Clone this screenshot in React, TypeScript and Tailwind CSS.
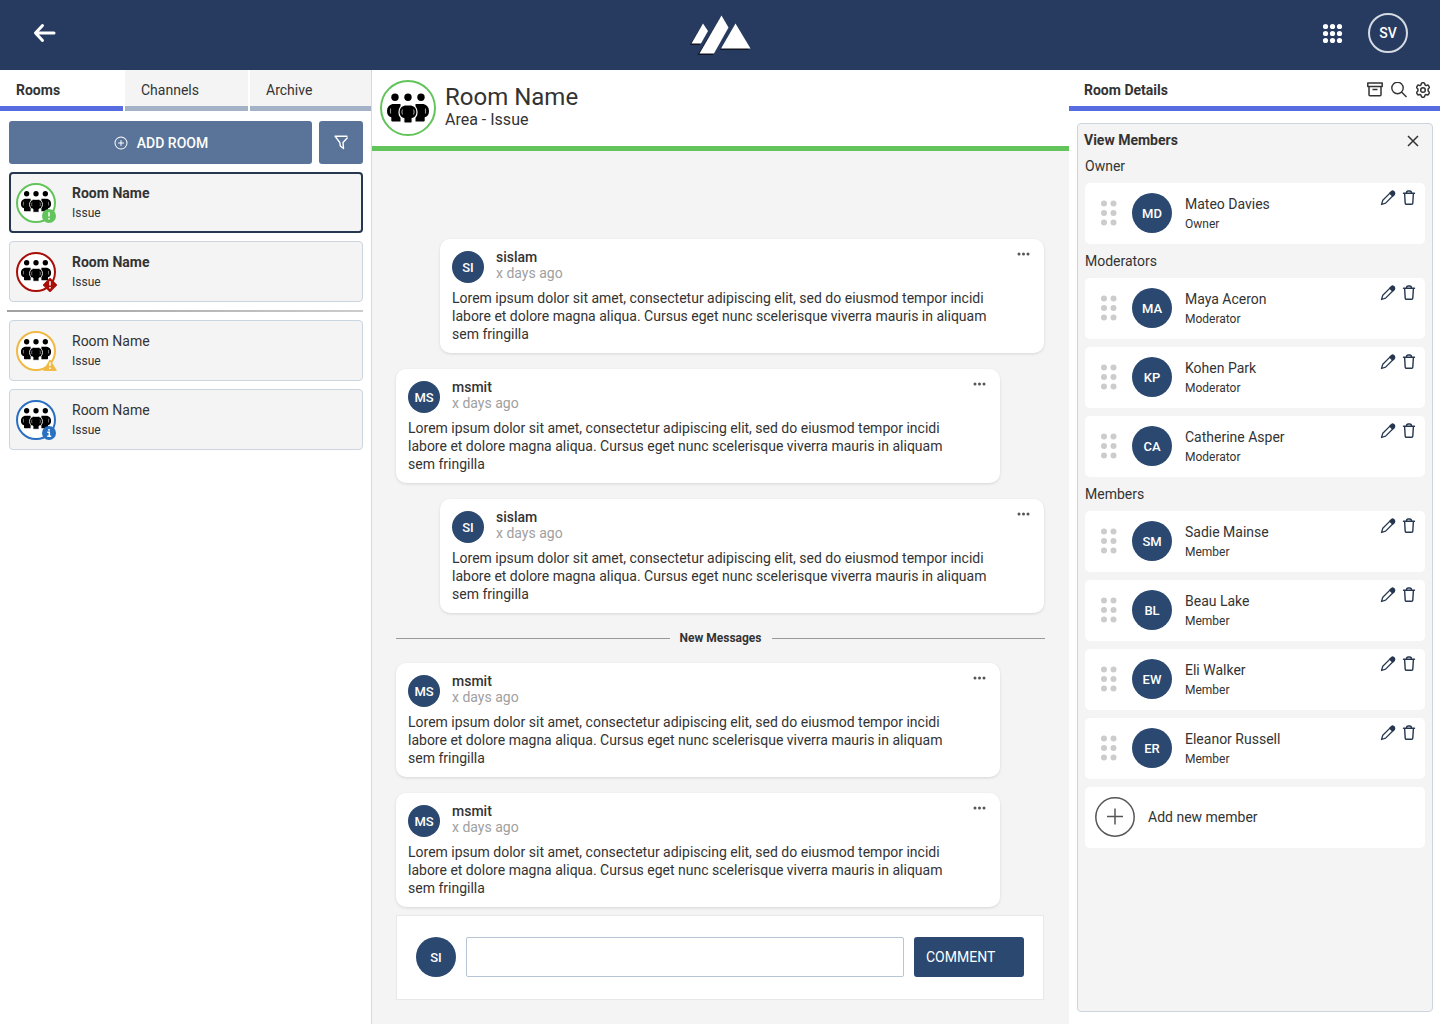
import React from "react";
import clsx from "clsx";
import { PiPlusCircle } from "react-icons/pi";

type RoomStatus = "success" | "danger" | "warning" | "info";

type Room = { name: string; issue: string; status: RoomStatus; unread: boolean };

const unreadRooms: Room[] = [
  { name: "Room Name", issue: "Issue", status: "success", unread: true },
  { name: "Room Name", issue: "Issue", status: "danger", unread: true },
];

const readRooms: Room[] = [
  { name: "Room Name", issue: "Issue", status: "warning", unread: false },
  { name: "Room Name", issue: "Issue", status: "info", unread: false },
];

const MESSAGE_BODY =
  "Lorem ipsum dolor sit amet, consectetur adipiscing elit, sed do eiusmod tempor incidi labore et dolore magna aliqua. Cursus eget nunc scelerisque viverra mauris in aliquam sem fringilla";

const oldMessages = [
  { user: "sislam", initials: "SI", own: true },
  { user: "msmit", initials: "MS", own: false },
  { user: "sislam", initials: "SI", own: true },
];

const newMessages = [
  { user: "msmit", initials: "MS", own: false },
  { user: "msmit", initials: "MS", own: false },
];

const memberGroups = [
  {
    title: "Owner",
    role: "Owner",
    members: [{ name: "Mateo Davies", initials: "MD" }],
  },
  {
    title: "Moderators",
    role: "Moderator",
    members: [
      { name: "Maya Aceron", initials: "MA" },
      { name: "Kohen Park", initials: "KP" },
      { name: "Catherine Asper", initials: "CA" },
    ],
  },
  {
    title: "Members",
    role: "Member",
    members: [
      { name: "Sadie Mainse", initials: "SM" },
      { name: "Beau Lake", initials: "BL" },
      { name: "Eli Walker", initials: "EW" },
      { name: "Eleanor Russell", initials: "ER" },
    ],
  },
];

const statusBorder: Record<RoomStatus, string> = {
  success: "border-[#62c45a]",
  danger: "border-[#a80f08]",
  warning: "border-[#f0b944]",
  info: "border-[#2a70c2]",
};

const Logo = () => (
  <svg width="62" height="42" viewBox="0 0 62 42" aria-label="Home">
    <g fill="#10151f">
      <path d="M1 31 13 11 18 18 11 31Z" />
      <path d="M8.500 41 31 4 38 15 24 41Z" />
      <path d="M31 36 46 11 60 36Z" />
    </g>
    <g fill="#fff">
      <path d="M2.500 29.500 14 9.500 19 17 12 29.500Z" />
      <path d="M10.500 39.500 32.500 1.500 39.500 13.500 25 39.500Z" />
      <path d="M32 34.500 46.500 9.500 61.500 34.500Z" />
    </g>
  </svg>
);

const PeopleIcon = ({ className }: { className: string }) => (
  <svg viewBox="0 0 44 32" className={className} aria-hidden="true">
    <circle cx="9" cy="5.200" r="3.700" />
    <circle cx="22" cy="5.200" r="3.700" />
    <circle cx="35" cy="5.200" r="3.700" />
    <path d="M6.500 12h8v17.500H6.300a1 1 0 0 1-1-1v-3.200C2.500 24.800 1 22.500 1 19s2-6 5.500-7Z" />
    <path d="M37.500 12h-8v17.500h8.200a1 1 0 0 0 1-1v-3.200c2.800-.5 4.300-2.800 4.300-6.300s-2-6-5.500-7Z" />
    <path
      d="M18.500 13h7c3.500 1 5.500 3.500 5.500 7s-2 6-4.800 6.500V30a1 1 0 0 1-1 1h-6.400a1 1 0 0 1-1-1v-3.500C15 26 13 23.500 13 20s2-6 5.500-7Z"
      stroke="#fff"
      strokeWidth="1.200"
    />
    <path
      d="M4.500 16.500v5M39.500 16.500v5M16.500 17.500c-.8 1.500-.8 3.500 0 5M27.500 17.500c.8 1.500.8 3.500 0 5"
      stroke="#999"
      strokeWidth="1.100"
      fill="none"
    />
  </svg>
);

const FilterIcon = () => (
  <svg width="14" height="15" viewBox="0 0 14 15" fill="none" stroke="currentColor" strokeWidth="1.400" strokeLinejoin="round" strokeLinecap="round" aria-hidden="true">
    <path d="M13 1.200H1L5.800 7.500l.5 3.500L9.500 13.500 9 7.500 13.200 3" />
  </svg>
);

const PencilIcon = () => (
  <svg width="16" height="16" viewBox="0 0 16 16" fill="none" stroke="currentColor" strokeWidth="1.300" strokeLinejoin="round" aria-hidden="true">
    <path d="M1.500 14.500 2.800 10.300 11.200 1.900a1.900 1.900 0 0 1 2.800 2.800L5.600 13.100Z" />
    <path d="m9.800 3.300 1.400-1.400a1.900 1.900 0 0 1 2.800 2.800l-1.400 1.400Z" fill="currentColor" />
  </svg>
);

const TrashIcon = () => (
  <svg width="16" height="16" viewBox="0 0 16 16" fill="none" stroke="currentColor" strokeWidth="1.400" strokeLinejoin="round" strokeLinecap="round" aria-hidden="true">
    <path d="M2.500 3.200h11M3.600 3.200l.6 9.900a1.200 1.200 0 0 0 1.200 1.200h5.200a1.200 1.200 0 0 0 1.200-1.200l.6-9.900M5.500 3c0-1.300.6-2 1.700-2h1.600c1.100 0 1.700.7 1.700 2" />
  </svg>
);

const StatusBadge = ({ status }: { status: RoomStatus }) => (
  <svg
    viewBox="0 0 14 14"
    className={clsx(
      "absolute -bottom-0.5 size-3.5",
      status === "success" || status === "info" ? "-right-0.5" : "-right-[3px]"
    )}
    aria-hidden="true"
  >
    {status === "success" && <circle cx="7" cy="7" r="7" fill="#62c45a" />}
    {status === "danger" && (
      <path d="M7 1 13 7 7 13 1 7Z" fill="#a80f08" stroke="#a80f08" strokeWidth="2" strokeLinejoin="round" />
    )}
    {status === "warning" && (
      <path d="M7 3 13.300 13.400H.7Z" fill="#f0b944" stroke="#f0b944" strokeLinejoin="round" />
    )}
    {status === "info" && <circle cx="7" cy="7" r="7" fill="#2a70c2" />}
    {status === "info" ? (
      <path d="M7 3v1.800M5.300 6.300H7.300V10M5.200 10.300h4" stroke="#fff" strokeWidth="1.500" fill="none" />
    ) : (
      <path
        d={status === "warning" ? "M7 5.500v3.500M7 10.500v1.500" : "M7 3.200v4.300M7 9v1.600"}
        stroke="#fff"
        strokeWidth="1.500"
      />
    )}
  </svg>
);

const Avatar = ({ initials, small }: { initials: string; small?: boolean }) => (
  <span
    className={clsx(
      "flex shrink-0 items-center justify-center rounded-full bg-[#2a4870] pt-0.5 text-[13px] font-medium text-white",
      small ? "size-8" : "size-10"
    )}
  >
    {initials}
  </span>
);

const RoomCard = ({ room, active }: { room: Room; active?: boolean }) => (
  <button
    className={clsx(
      "flex h-[61px] w-full items-center gap-4 rounded-[4px] bg-[#f4f4f4] text-left",
      active ? "border-2 border-[#26374f] px-[5px]" : "border border-[#cbd5e0] px-1.5"
    )}
  >
    <span className={clsx("relative size-10 rounded-full border-2 bg-white", statusBorder[room.status])}>
      <PeopleIcon className="absolute left-0.5 top-[5px] h-[23px] w-8" />
      <StatusBadge status={room.status} />
    </span>
    <span className="flex flex-col">
      <span className={clsx("text-sm leading-5", room.unread && "font-bold")}>{room.name}</span>
      <span className="text-xs leading-5">{room.issue}</span>
    </span>
  </button>
);

const Message = ({ user, initials, own }: { user: string; initials: string; own: boolean }) => (
  <article
    className={clsx(
      "rounded-[10px] bg-white px-3 py-2.5 shadow-[0_1px_3px_rgba(0,0,0,0.12)]",
      own ? "ml-11" : "mr-11"
    )}
  >
    <div className="mb-1.5 flex h-[34px] items-start gap-3">
      <div className="pt-0.5">
        <Avatar initials={initials} small />
      </div>
      <div className="flex flex-1 flex-col text-sm leading-4">
        <span className="font-medium">{user}</span>
        <span className="text-[#a0a0a0]">x days ago</span>
      </div>
      <button aria-label="Message options" className="px-0.5 py-[3px]">
        <svg width="13" height="4" viewBox="0 0 13 4" fill="#555">
          <circle cx="2" cy="2" r="1.500" />
          <circle cx="6.500" cy="2" r="1.500" />
          <circle cx="11" cy="2" r="1.500" />
        </svg>
      </button>
    </div>
    <p className="pr-11 text-sm leading-[18px]">{MESSAGE_BODY}</p>
  </article>
);

const MemberCard = ({ name, initials, role }: { name: string; initials: string; role: string }) => (
  <li className="flex h-[61px] rounded-[5px] bg-white">
    <div className="flex flex-1 items-center pb-px pl-[15px]">
      <svg width="17" height="26" viewBox="0 0 17 26" fill="#ccc" className="mr-[15px]" aria-hidden="true">
        <circle cx="4" cy="3.500" r="3" />
        <circle cx="13.500" cy="3.500" r="3" />
        <circle cx="4" cy="13" r="3" />
        <circle cx="13.500" cy="13" r="3" />
        <circle cx="4" cy="22.500" r="3" />
        <circle cx="13.500" cy="22.500" r="3" />
      </svg>
      <Avatar initials={initials} />
      <div className="ml-[13px] flex flex-col pt-0.5">
        <span className="text-sm leading-5">{name}</span>
        <span className="text-xs leading-5">{role}</span>
      </div>
    </div>
    <div className="flex items-start gap-[5px] pr-2 pt-[7px] text-[#26374f]">
      <button aria-label={`Edit ${name}`}>
        <PencilIcon />
      </button>
      <button aria-label={`Remove ${name}`}>
        <TrashIcon />
      </button>
    </div>
  </li>
);

export default function App() {
  return (
    <div className="flex min-h-screen flex-col bg-white font-['Roboto',sans-serif] text-sm text-[#333]">
      <header className="grid h-[70px] grid-cols-3 items-center bg-[#273b60] px-8 pb-1 text-white">
        <button aria-label="Back" className="justify-self-start">
          <svg width="24" height="24" viewBox="0 0 24 24" fill="none" stroke="currentColor" strokeWidth="3" strokeLinecap="round" strokeLinejoin="round">
            <path d="M22 12H4M10.500 4.500 3.500 12l7 7.500" />
          </svg>
        </button>
        <a href="#" className="justify-self-center pt-1">
          <Logo />
        </a>
        <div className="flex items-center gap-[25px] justify-self-end">
          <button aria-label="Apps">
            <svg width="20" height="20" viewBox="0 0 20 20" fill="currentColor">
              {[3, 10, 17].map((y) =>
                [2.5, 9.5, 16.5].map((x) => <circle key={`${x}-${y}`} cx={x} cy={y + 0.5} r="2.600" />)
              )}
            </svg>
          </button>
          <button className="size-10 rounded-full border-2 border-[#d5dae2] text-sm font-medium">SV</button>
        </div>
      </header>

      <div className="grid flex-1 grid-cols-[372px_1fr_371px]">
        <aside className="border-r border-[#d9d9d9]">
          <nav className="grid grid-cols-[123px_123px_1fr] gap-0.5">
            <button className="h-[41px] border-b-[5px] border-[#576ce0] px-4 pt-1 text-left font-bold">Rooms</button>
            <button className="h-[41px] border-b-[5px] border-[#a4b2c8] bg-[#f4f4f4] px-4 pt-1 text-left">Channels</button>
            <button className="h-[41px] border-b-[5px] border-[#a4b2c8] bg-[#f4f4f4] px-4 pt-1 text-left">Archive</button>
          </nav>
          <div className="flex flex-col gap-2 py-2.5 pl-[9px] pr-2">
            <div className="flex h-[43px] gap-[7px]">
              <button className="flex flex-1 items-center justify-center gap-2 rounded-[3px] bg-[#5a7499] font-medium text-white">
                <PiPlusCircle className="size-4" />
                ADD ROOM
              </button>
              <button aria-label="Filter rooms" className="flex w-11 items-center justify-center rounded-[3px] bg-[#5a7499] text-white">
                <FilterIcon />
              </button>
            </div>
            {unreadRooms.map((room, index) => (
              <RoomCard key={index} room={room} active={index === 0} />
            ))}
            <hr className="-ml-0.5 h-0.5 border-0 bg-linear-to-r from-[#a0a0a0] to-[#cccccc]" />
            {readRooms.map((room, index) => (
              <RoomCard key={index} room={room} />
            ))}
          </div>
        </aside>

        <main className="flex flex-col bg-[#f4f4f4]">
          <div className="flex h-[81px] items-center gap-[9px] border-b-[5px] border-[#62c45a] bg-white px-2">
            <span className="flex size-14 items-center justify-center rounded-full border-2 border-[#62c45a]">
              <PeopleIcon className="h-8 w-11" />
            </span>
            <div className="pb-1">
              <h1 className="text-2xl leading-7">Room Name</h1>
              <p className="text-base leading-[18px]">Area - Issue</p>
            </div>
          </div>
          <div className="flex flex-1 flex-col justify-end pb-6 pl-6 pr-[25px]">
            <div className="flex flex-col gap-4">
              {oldMessages.map((message, index) => (
                <Message key={index} {...message} />
              ))}
              <div className="-mr-px flex h-[18px] items-center gap-2.5 text-xs font-bold">
                <span className="h-px flex-1 bg-[#999]" />
                New Messages
                <span className="h-px flex-1 bg-[#999]" />
              </div>
              {newMessages.map((message, index) => (
                <Message key={index} {...message} />
              ))}
            </div>
            <form className="mt-2 flex h-[85px] items-center gap-2.5 border border-[#e8e8e8] bg-white px-[19px] pb-px">
              <Avatar initials="SI" />
              <input
                aria-label="Comment"
                className="h-10 min-w-0 flex-1 rounded-[2px] border border-[#b8c5d6] px-3"
              />
              <button type="button" className="h-10 w-[110px] rounded-[3px] bg-[#2a4870] px-3 text-left text-white">
                COMMENT
              </button>
            </form>
          </div>
        </main>

        <aside className="flex flex-col">
          <div className="flex h-[41px] items-center justify-between border-b-[5px] border-[#576ce0] pl-[15px] pr-[9px] pt-1">
            <h2 className="font-bold">Room Details</h2>
            <div className="flex items-center gap-2">
              <button aria-label="Archive room">
                <svg width="16" height="16" viewBox="0 0 16 16" fill="none" stroke="currentColor" strokeWidth="1.500" strokeLinejoin="round">
                  <path d="M.8 1h14.400v3.500H.8ZM2 4.500v8.200a1 1 0 0 0 1 1h10a1 1 0 0 0 1-1V4.500M5.500 7.500h5" />
                </svg>
              </button>
              <button aria-label="Search">
                <svg width="16" height="16" viewBox="0 0 16 16" fill="none" stroke="currentColor" strokeWidth="1.400">
                  <circle cx="6.500" cy="6" r="5.700" />
                  <path d="m10.500 10 5 5" />
                </svg>
              </button>
              <button aria-label="Settings">
                <svg width="16" height="16" viewBox="0 0 16 16" fill="none" stroke="currentColor" strokeWidth="1.500" strokeLinejoin="round">
                  <path d="M6.300 1.800Q6.500.8 7.300.8h1.400q.8 0 1 1l.3 1.100 1 .6 1.100-.3q1-.3 1.400.4l.7 1.200q.4.700-.3 1.400l-.8.800v2l.8.800q.7.700.3 1.400l-.7 1.200q-.4.700-1.400.4l-1.100-.3-1 .6-.3 1.100q-.2 1-1 1H7.300q-.8 0-1-1L6 13.100l-1-.6-1.100.3q-1 .3-1.400-.4l-.7-1.200q-.4-.7.3-1.400l.8-.8V7l-.8-.8q-.7-.7-.3-1.400l.7-1.200q.4-.7 1.400-.4l1.100.3 1-.6Z" />
                  <circle cx="8" cy="8" r="2.300" />
                </svg>
              </button>
            </div>
          </div>
          <section className="mb-3 ml-2 mr-[7px] mt-3 flex-1 rounded-[4px] border border-[#cbd5e0] bg-[#f4f4f4] px-[7px] pt-[7px]">
            <div className="-ml-px flex h-[18px] items-center justify-between pr-1.5">
              <h3 className="font-bold">View Members</h3>
              <button aria-label="Close members" className="pt-0.5">
                <svg width="12" height="12" viewBox="0 0 12 12" stroke="currentColor" strokeWidth="1.500">
                  <path d="m1 1 10 10M11 1 1 11" />
                </svg>
              </button>
            </div>
            {memberGroups.map((group) => (
              <div key={group.title}>
                <h4 className="leading-[34px]">{group.title}</h4>
                <ul className="flex flex-col gap-2">
                  {group.members.map((member) => (
                    <MemberCard key={member.name} {...member} role={group.role} />
                  ))}
                </ul>
              </div>
            ))}
            <button className="mt-2 flex h-[61px] w-full items-center gap-[13px] rounded-[5px] bg-white px-2.5 pb-px">
              <svg width="40" height="40" viewBox="0 0 40 40" fill="none" stroke="#555" strokeWidth="1.500">
                <circle cx="20" cy="20" r="19.200" />
                <path d="M12 19.500h16M20 11.500v16" />
              </svg>
              Add new member
            </button>
          </section>
        </aside>
      </div>
    </div>
  );
}
